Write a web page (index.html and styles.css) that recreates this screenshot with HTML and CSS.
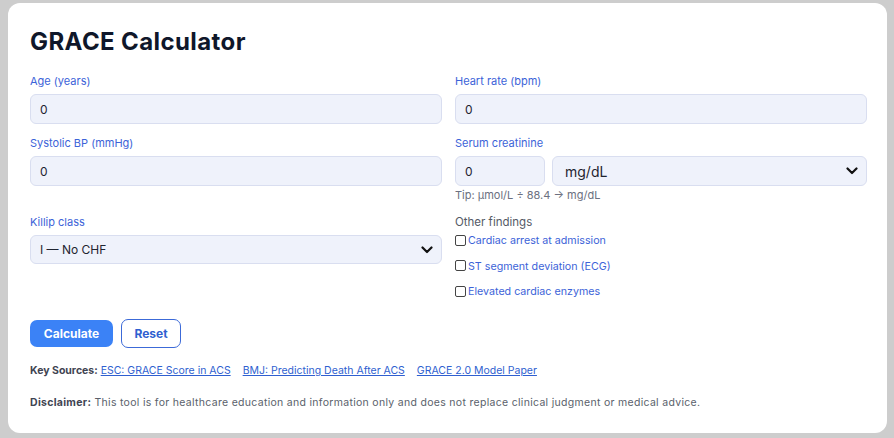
FILE: index.html
```html
<!DOCTYPE html>
<html>
<head>
<meta charset="utf-8">
<link rel="stylesheet" href="styles.css">
</head>
<body>
<div class="card">
  <h1 class="title">GRACE Calculator</h1>
  <div class="grid">
    <div class="field">
      <label class="label">Age (years)</label>
      <input class="input" type="text" value="0">
    </div>
    <div class="field">
      <label class="label">Heart rate (bpm)</label>
      <input class="input" type="text" value="0">
    </div>
    <div class="field">
      <label class="label">Systolic BP (mmHg)</label>
      <input class="input" type="text" value="0">
    </div>
    <div class="field">
      <label class="label">Serum creatinine</label>
      <div class="creat-row">
        <input class="input small" type="text" value="0">
        <div class="select-wrap grow">
          <select class="select big"><option>mg/dL</option></select>
          <svg class="chev" viewBox="0 0 12 8" width="12" height="8"><path d="M1.5 1.5 L6 6 L10.5 1.5" fill="none" stroke="#111" stroke-width="2.2" stroke-linecap="round" stroke-linejoin="round"/></svg>
        </div>
      </div>
      <div class="tip">Tip: µmol/L ÷ 88.4 → mg/dL</div>
    </div>
    <div class="field">
      <label class="label">Killip class</label>
      <div class="select-wrap">
        <select class="select"><option>I — No CHF</option></select>
        <svg class="chev" viewBox="0 0 12 8" width="12" height="8"><path d="M1.5 1.5 L6 6 L10.5 1.5" fill="none" stroke="#111" stroke-width="2.2" stroke-linecap="round" stroke-linejoin="round"/></svg>
      </div>
    </div>
    <div class="field">
      <div class="label gray">Other findings</div>
      <label class="check"><span class="box"></span>Cardiac arrest at admission</label>
      <label class="check"><span class="box"></span>ST segment deviation (ECG)</label>
      <label class="check"><span class="box"></span>Elevated cardiac enzymes</label>
    </div>
  </div>
  <div class="actions">
    <button class="btn primary">Calculate</button>
    <button class="btn outline">Reset</button>
  </div>
  <p class="sources"><b>Key Sources:</b> <a href="#">ESC: GRACE Score in ACS</a><a href="#">BMJ: Predicting Death After ACS</a><a href="#">GRACE 2.0 Model Paper</a></p>
  <p class="disclaimer"><b>Disclaimer:</b> This tool is for healthcare education and information only and does not replace clinical judgment or medical advice.</p>
</div>
</body>
</html>
```
FILE: styles.css
```css
html, body {
  margin: 0;
  padding: 0;
  background: #cdcdcd;
}
body {
  padding: 3px 7px 5px 8px;
  font-family: "Inter", "Liberation Sans", sans-serif;
}
.card {
  background: #ffffff;
  border-radius: 12px;
  padding: 22px 20px 0 22px;
  height: 430px;
  box-sizing: border-box;
}
.title {
  margin: 0 0 14px 0;
  font-size: 24px;
  line-height: 34px;
  font-weight: 700;
  color: #0f172a;
  letter-spacing: 0.4px;
}
.grid {
  display: grid;
  grid-template-columns: 412px 412px;
  column-gap: 13px;
  row-gap: 11px;
  align-items: start;
}
.field {
  display: flex;
  flex-direction: column;
}
.label {
  font-size: 11px;
  line-height: 16px;
  color: #3c63d8;
  margin-bottom: 5px;
}
.label.gray {
  color: #555a66;
  font-size: 11.5px;
  margin-bottom: 3px;
}
.input, .select {
  box-sizing: border-box;
  height: 30px;
  width: 100%;
  border: 1px solid #d9def0;
  background: #eff2fb;
  border-radius: 6px;
  padding: 0 9px;
  font-family: inherit;
  font-size: 12px;
  color: #1f2430;
  outline: none;
}
.select {
  -webkit-appearance: none;
  appearance: none;
  height: 29px;
}
.select.big {
  height: 30px;
  font-size: 14px;
  padding-left: 12px;
}
.select-wrap {
  position: relative;
}
.chev {
  position: absolute;
  right: 9px;
  top: 11px;
  pointer-events: none;
}
.creat-row {
  display: flex;
  gap: 7px;
}
.input.small {
  width: 90px;
  flex: none;
}
.grow {
  flex: 1;
}
.tip {
  font-size: 11px;
  line-height: 16px;
  color: #6b7080;
  margin-top: 1px;
}
.check {
  display: flex;
  align-items: center;
  font-size: 10.7px;
  line-height: 16px;
  color: #3c63d8;
  height: 16px;
  margin-bottom: 9.5px;
}
.box {
  width: 11px;
  height: 11px;
  border: 1px solid #444;
  border-radius: 2px;
  margin-right: 2px;
  box-sizing: border-box;
  flex: none;
  margin-top: -2px;
}
.actions {
  display: flex;
  gap: 8px;
  margin-top: 9px;
}
.btn {
  font-family: inherit;
  font-weight: 700;
  font-size: 12px;
  border-radius: 7px;
  cursor: pointer;
}
.primary {
  background: #3b82f6;
  color: #ffffff;
  border: none;
  width: 83px;
  height: 27px;
  margin-top: 1px;
}
.outline {
  background: #ffffff;
  color: #2f5fd0;
  border: 1px solid #3c6ad8;
  width: 60px;
  height: 29px;
}
.sources {
  margin: 15px 0 0 0;
  font-size: 10.5px;
  line-height: 16px;
  color: #4b5060;
}
.sources b, .disclaimer b {
  color: #3f4452;
}
.sources a {
  color: #2f5fd0;
  text-decoration: underline;
  margin-right: 12px;
}
.disclaimer {
  margin: 16px 0 0 0;
  font-size: 10.5px;
  line-height: 16px;
  color: #5a5f6b;
  letter-spacing: 0.3px;
}
```
